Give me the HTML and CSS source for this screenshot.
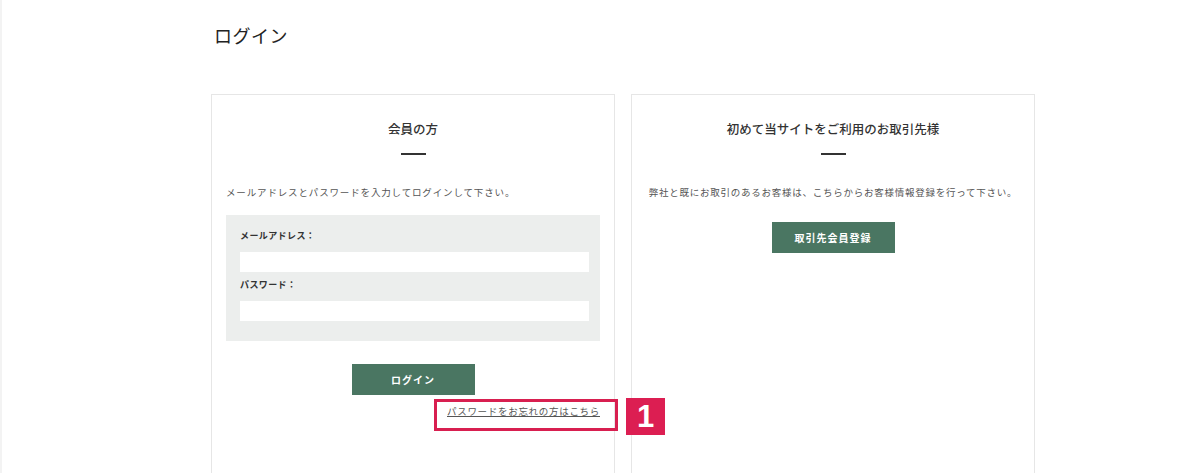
FILE: index.html
```html
<!DOCTYPE html>
<html lang="ja">
<head>
<meta charset="utf-8">
<title>ログイン</title>
<link rel="stylesheet" href="styles.css">
</head>
<body>
<div class="page">
  <div class="container">
    <h1 class="page-title">ログイン</h1>
    <div class="cards">
      <section class="card">
        <h2 class="card-title">会員の方</h2>
        <div class="dash"></div>
        <p class="desc">メールアドレスとパスワードを入力してログインして下さい。</p>
        <div class="form-box">
          <label class="field-label">メールアドレス：</label>
          <div class="input"></div>
          <label class="field-label">パスワード：</label>
          <div class="input"></div>
        </div>
        <div class="btn-row"><span class="btn btn-login">ログイン</span></div>
        <div class="link-row">
          <a class="forgot">パスワードをお忘れの方はこちら</a>
        </div>
      </section>
      <section class="card">
        <h2 class="card-title">初めて当サイトをご利用のお取引先様</h2>
        <div class="dash"></div>
        <p class="desc">弊社と既にお取引のあるお客様は、こちらからお客様情報登録を行って下さい。</p>
        <div class="btn-row btn-row-right"><span class="btn btn-register">取引先会員登録</span></div>
      </section>
    </div>
  </div>
  <div class="annot-box"></div>
  <div class="annot-badge">1</div>
</div>
</body>
</html>
```

FILE: styles.css
```css
html, body {
  margin: 0;
  padding: 0;
  background: #fff;
}
body {
  font-family: "Noto Sans CJK JP", "Noto Sans", sans-serif;
  color: #333;
  height: 473px;
  overflow: hidden;
}
.page {
  position: relative;
  height: 473px;
  overflow: hidden;
  border-left: 2px solid #f3f3f3;
  box-sizing: border-box;
}
.container {
  width: 824px;
  margin-left: 209px;
}
.page-title {
  margin: 0;
  padding-top: 23px;
  padding-left: 3px;
  font-size: 18px;
  font-weight: 400;
  line-height: 24px;
  letter-spacing: 0.5px;
  color: #222;
}
.cards {
  display: flex;
  gap: 16px;
  margin-top: 47px;
}
.card {
  width: 404px;
  height: 381px;
  box-sizing: border-box;
  border: 1px solid #e6e6e6;
  padding: 0 14px;
  text-align: center;
}
.card-title {
  margin: 0;
  padding-top: 24px;
  font-size: 12.5px;
  line-height: 20px;
  font-weight: 500;
  color: #333;
}
.dash {
  width: 25px;
  height: 1.5px;
  background: #333;
  margin: 14px auto 0;
}
.desc {
  margin: 30px 0 0;
  font-size: 9.5px;
  line-height: 14px;
  letter-spacing: 0.85px;
  color: #555;
  text-align: left;
  white-space: nowrap;
}
.card + .card .desc {
  text-align: center;
  letter-spacing: 0.75px;
}
.form-box {
  margin-top: 16px;
  background: #eceeed;
  padding: 14px 11px 20px 14px;
  text-align: left;
}
.field-label {
  display: block;
  font-size: 9px;
  line-height: 14px;
  font-weight: 700;
  letter-spacing: 0.4px;
  color: #333;
}
.input {
  height: 20px;
  background: #fff;
  margin: 9px 0 6px;
}
.input:last-child {
  margin-bottom: 0;
}
.btn-row {
  display: flex;
  justify-content: center;
  margin-top: 23px;
}
.btn-row-right {
  margin-top: 23px;
}
.btn {
  display: flex;
  align-items: center;
  justify-content: center;
  width: 123px;
  height: 31px;
  background: #4a7662;
  color: #fff;
  font-size: 10px;
  font-weight: 700;
  letter-spacing: 1px;
}
.link-row {
  display: flex;
  justify-content: flex-end;
  margin-top: 9px;
}
.forgot {
  font-size: 9.5px;
  line-height: 14px;
  letter-spacing: 0.7px;
  color: #555;
  text-decoration: underline;
}
.annot-box {
  position: absolute;
  left: 432px;
  top: 399px;
  width: 184px;
  height: 32px;
  box-sizing: border-box;
  border: 3px solid #d81f50;
}
.annot-badge {
  position: absolute;
  left: 624px;
  top: 398px;
  width: 39px;
  height: 37px;
  background: #dc1e52;
  color: #fff;
  font-family: "Liberation Sans", Arial, sans-serif;
  font-weight: 700;
  font-size: 31px;
  line-height: 37px;
  text-align: center;
}
```
